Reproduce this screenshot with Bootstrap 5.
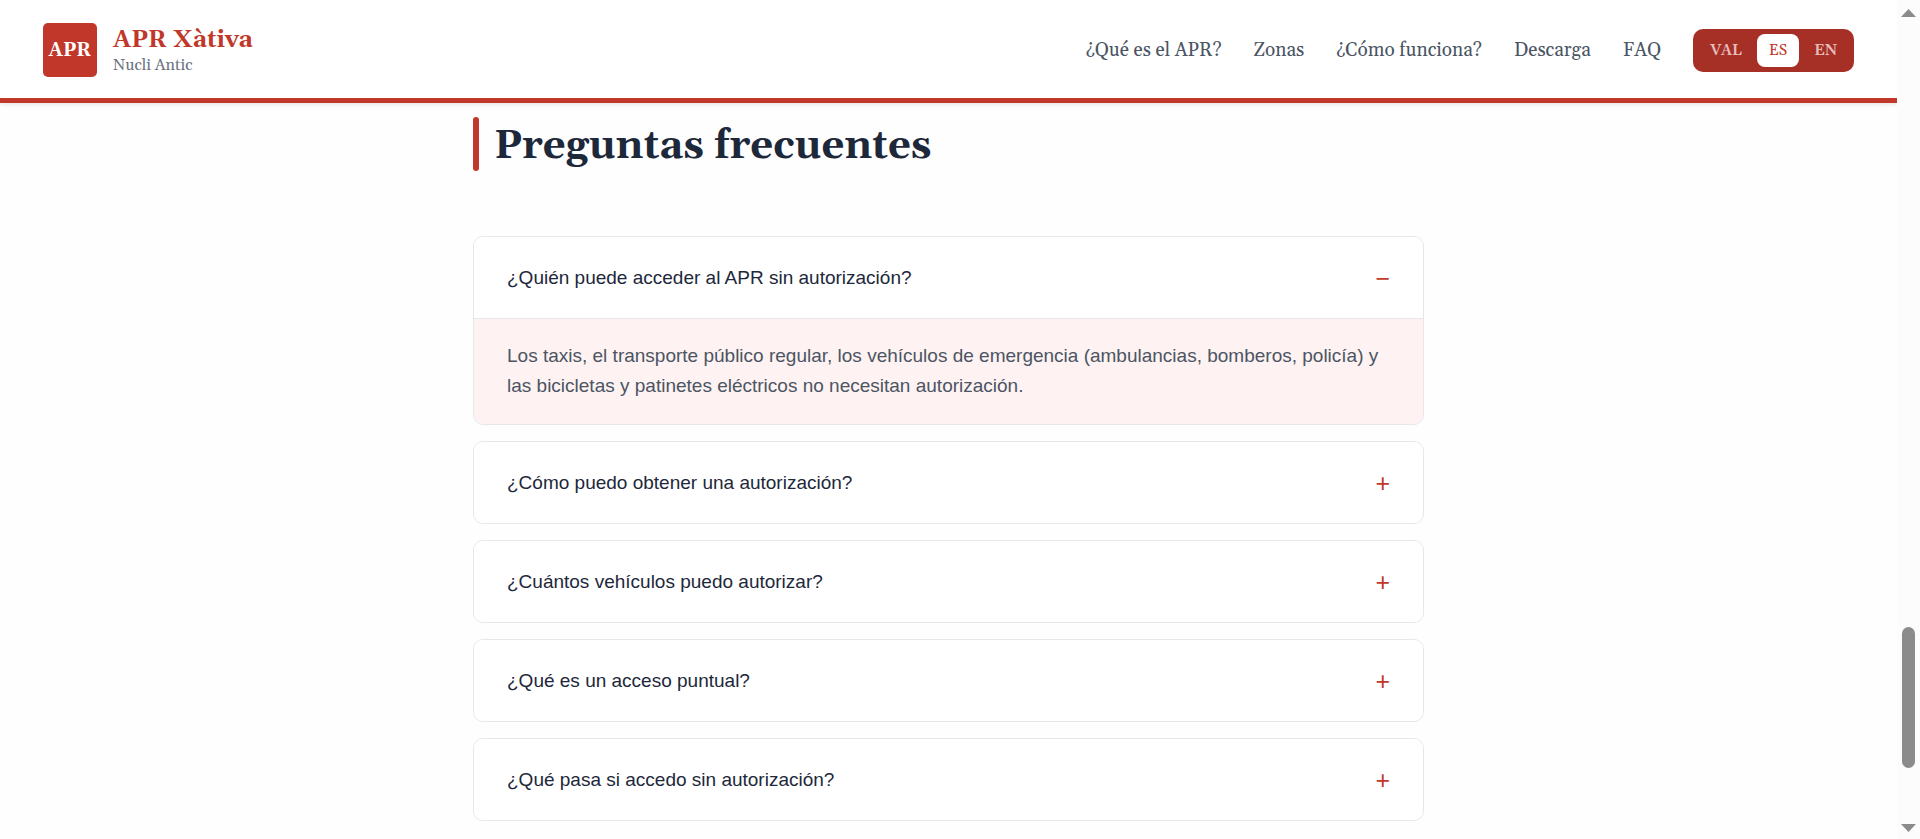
<!DOCTYPE html>
<html lang="es">
<head>
<meta charset="utf-8">
<meta name="viewport" content="width=device-width, initial-scale=1">
<title>APR Xàtiva – Preguntas frecuentes</title>
<link href="https://cdn.jsdelivr.net/npm/bootstrap@5.3.0/dist/css/bootstrap.min.css" rel="stylesheet">
<style>
  :root { --apr-red: #c1382b; --apr-dark: #a73026; --apr-ink: #1d283a; --apr-line: #e5e7eb; --apr-serif: Gelasio, Georgia, "DejaVu Serif", serif; }
  body { background: #fefefe; color: var(--apr-ink); font-family: "Liberation Sans", Arial, sans-serif; font-size: 19px; }
  .site-header { background: #fff; border-bottom: 5px solid var(--apr-red); box-shadow: 0 1px 5px rgba(0,0,0,.12); padding: 23px 43px 21px; font-family: var(--apr-serif); }
  .brand-mark { width: 54px; height: 54px; border-radius: 5px; background: var(--apr-red); color: #fff; font-size: 19px; font-weight: 700; }
  .brand-text { padding-top: 3px; }
  .brand-name { color: var(--apr-red); font-size: 24px; line-height: 28px; font-weight: 700; }
  .brand-sub { color: #6b7280; font-size: 16px; line-height: 23px; }
  .menu { gap: 32px; }
  .menu a { color: #4b5563; font-size: 19px; line-height: 28px; }
  .lang-switch { background: var(--apr-dark); border-radius: 10px; padding: 5px; gap: 3px; }
  .lang-switch button { border: 0; border-radius: 8px; padding: 0 12px; background: transparent; color: #e6bfbc; font-size: 15px; line-height: 33px; font-weight: 600; }
  .lang-switch button.active { background: #fff; color: var(--apr-red); font-weight: 400; }
  .faq { max-width: 951px; padding: 14px 0; }
  .faq-title { gap: 15px; margin-bottom: 65px; font-family: var(--apr-serif); font-size: 40px; line-height: 48px; font-weight: 700; }
  .faq-title::before { content: ""; width: 6px; height: 54px; border-radius: 3px; background: var(--apr-red); }
  .faq-title span { padding-top: 6px; }
  .faq-list { gap: 16px; }
  .faq-item { border: 1px solid var(--apr-line); border-radius: 10px; overflow: hidden; }
  .faq-item button { border: 0; background: #fff; color: var(--apr-ink); padding: 0 33px; line-height: 81px; }
  .faq-sign { color: var(--apr-red); font-size: 25px; line-height: 79px; padding-top: 2px; }
  .faq-sign::before { content: "+"; }
  [aria-expanded="true"] .faq-sign::before { content: "−"; }
  .faq-answer { border-top: 1px solid var(--apr-line); background: #fef2f2; color: #4b5563; padding: 22px 33px 23px; line-height: 30px; }
  .scroll-rail { width: 23px; background: #fcfcfc; padding: 9px 0 7px; }
  .scroll-thumb { width: 13px; height: 141px; border-radius: 7px; background: #8b8b8b; }
</style>
</head>
<body class="d-flex min-vh-100">
<div class="flex-grow-1">
  <header class="site-header d-flex justify-content-between align-items-center">
    <a href="#" class="d-flex align-items-center gap-3 text-decoration-none">
      <span class="brand-mark d-flex align-items-center justify-content-center">APR</span>
      <span class="brand-text d-flex flex-column">
        <span class="brand-name">APR Xàtiva</span>
        <span class="brand-sub">Nucli Antic</span>
      </span>
    </a>
    <nav class="menu d-flex align-items-center" aria-label="Principal">
      <a class="text-decoration-none" href="#apr">¿Qué es el APR?</a>
      <a class="text-decoration-none" href="#zonas">Zonas</a>
      <a class="text-decoration-none" href="#funciona">¿Cómo funciona?</a>
      <a class="text-decoration-none" href="#descarga">Descarga</a>
      <a class="text-decoration-none" href="#faq">FAQ</a>
      <div class="lang-switch d-flex" role="group" aria-label="Idioma">
        <button type="button">VAL</button>
        <button type="button" class="active" aria-pressed="true">ES</button>
        <button type="button">EN</button>
      </div>
    </nav>
  </header>
  <main class="faq mx-auto" id="faq">
    <h2 class="faq-title d-flex align-items-center mt-0"><span>Preguntas frecuentes</span></h2>
    <div class="faq-list d-flex flex-column">
      <div class="faq-item">
        <button type="button" class="w-100 d-flex justify-content-between text-start" data-bs-toggle="collapse" data-bs-target="#r1" aria-controls="r1" aria-expanded="true">¿Quién puede acceder al APR sin autorización?<span class="faq-sign"></span></button>
        <div class="collapse show" id="r1"><div class="faq-answer">Los taxis, el transporte público regular, los vehículos de emergencia (ambulancias, bomberos, policía) y las bicicletas y patinetes eléctricos no necesitan autorización.</div></div>
      </div>
      <div class="faq-item">
        <button type="button" class="w-100 d-flex justify-content-between text-start" aria-expanded="false">¿Cómo puedo obtener una autorización?<span class="faq-sign"></span></button>
      </div>
      <div class="faq-item">
        <button type="button" class="w-100 d-flex justify-content-between text-start" aria-expanded="false">¿Cuántos vehículos puedo autorizar?<span class="faq-sign"></span></button>
      </div>
      <div class="faq-item">
        <button type="button" class="w-100 d-flex justify-content-between text-start" aria-expanded="false">¿Qué es un acceso puntual?<span class="faq-sign"></span></button>
      </div>
      <div class="faq-item">
        <button type="button" class="w-100 d-flex justify-content-between text-start" aria-expanded="false">¿Qué pasa si accedo sin autorización?<span class="faq-sign"></span></button>
      </div>
    </div>
  </main>
</div>
<div class="scroll-rail vh-100 sticky-top flex-shrink-0 d-flex flex-column align-items-center" aria-hidden="true">
  <svg width="15" height="8" viewBox="0 0 30 16"><path d="M0 16 15 0 30 16z" fill="#8b8b8b"/></svg>
  <div class="flex-grow-1"></div>
  <div class="scroll-thumb mb-5"></div>
  <svg class="mt-2" width="15" height="8" viewBox="0 0 30 16"><path d="M0 0 15 16 30 0z" fill="#8b8b8b"/></svg>
</div>
<script src="https://cdn.jsdelivr.net/npm/bootstrap@5.3.0/dist/js/bootstrap.bundle.min.js"></script>
</body>
</html>
